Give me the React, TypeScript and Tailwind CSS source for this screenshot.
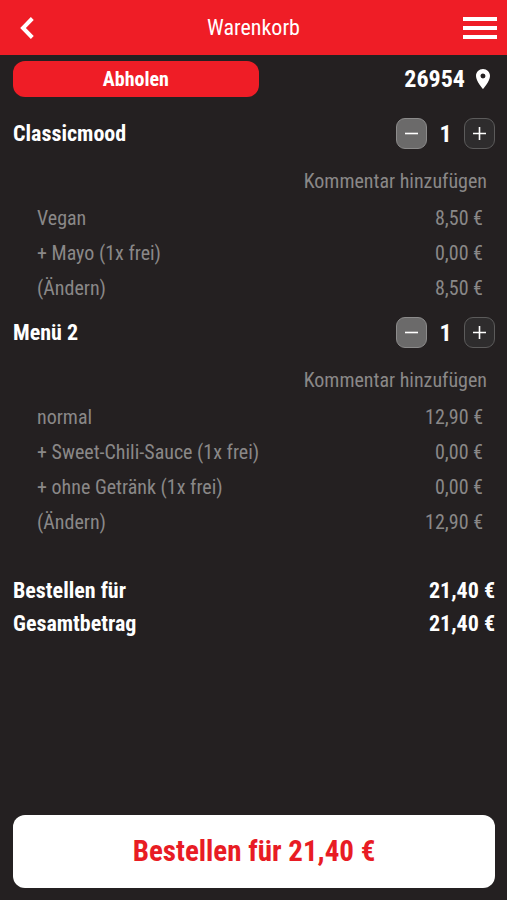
import { MdLocationOn } from "react-icons/md";

interface OptionProps {
  label: string;
  price: string;
}

interface CartItemProps {
  name: string;
  quantity: number;
  options: OptionProps[];
  total: string;
}

const items: CartItemProps[] = [
  {
    name: "Classicmood",
    quantity: 1,
    options: [
      { label: "Vegan", price: "8,50 €" },
      { label: "+ Mayo (1x frei)", price: "0,00 €" },
    ],
    total: "8,50 €",
  },
  {
    name: "Menü 2",
    quantity: 1,
    options: [
      { label: "normal", price: "12,90 €" },
      { label: "+ Sweet-Chili-Sauce (1x frei)", price: "0,00 €" },
      { label: "+ ohne Getränk (1x frei)", price: "0,00 €" },
    ],
    total: "12,90 €",
  },
];

function CartItem({ name, quantity, options, total }: CartItemProps) {
  return (
    <li>
      <div className="flex items-center justify-between">
        <h2 className="text-[22px] leading-7 font-bold">{name}</h2>
        <div className="flex items-center">
          <button
            type="button"
            aria-label={`${name} verringern`}
            className="flex size-[31px] items-center justify-center rounded-[9px] border border-[#8c8b8b] bg-[#6b6a6a]"
          >
            <svg viewBox="0 0 13 13" className="size-[13px]" stroke="white" strokeWidth="1.6">
              <path d="M0 6.5h13" />
            </svg>
          </button>
          <span className="w-[37px] text-center text-2xl leading-none font-bold">{quantity}</span>
          <button
            type="button"
            aria-label={`${name} erhöhen`}
            className="flex size-[31px] items-center justify-center rounded-[9px] border border-[#5c5b5b] bg-[#2e2c2d]"
          >
            <svg viewBox="0 0 13 13" className="size-[13px]" stroke="white" strokeWidth="1.6">
              <path d="M0 6.5h13M6.5 0v13" />
            </svg>
          </button>
        </div>
      </div>

      <div className="mt-3 pr-2 text-right text-xl leading-10 text-[#8a8888]">
        <button type="button">Kommentar hinzufügen</button>
      </div>

      <ul className="pr-3 pl-6 text-xl leading-[35px] text-[#8a8888]">
        {options.map((option) => (
          <li key={option.label} className="flex justify-between">
            <span>{option.label}</span>
            <span>{option.price}</span>
          </li>
        ))}
        <li className="flex justify-between">
          <button type="button">(Ändern)</button>
          <span>{total}</span>
        </li>
      </ul>
    </li>
  );
}

export default function App() {
  return (
    <div className="flex min-h-screen flex-col bg-[#242021] font-['Roboto_Condensed','Roboto',sans-serif] text-white">
      <header className="grid h-[55px] grid-cols-3 items-center bg-[#ef1d26] px-2">
        <button type="button" aria-label="Zurück" className="justify-self-start px-3">
          <svg viewBox="0 0 14 22" className="h-[22px] w-3.5" fill="none" stroke="white" strokeWidth="4">
            <path d="M12.3 1.5L3 11l9.3 9.5" />
          </svg>
        </button>
        <h1 className="text-center text-[22px]">Warenkorb</h1>
        <button type="button" aria-label="Menü" className="justify-self-end">
          <svg viewBox="0 0 38 24" className="h-6 w-[38px]" stroke="white" strokeWidth="4">
            <path d="M2 3h34M2 12h34M2 21h34" />
          </svg>
        </button>
      </header>

      <main className="flex grow flex-col pt-1.5 pr-3 pb-3 pl-[13px]">
        <div className="flex items-center justify-between">
          <button type="button" className="h-9 w-[51%] rounded-xl bg-[#ef1d26] text-xl font-bold">
            Abholen
          </button>
          <button type="button" className="flex items-center gap-1.5 text-2xl font-bold">
            26954
            <MdLocationOn className="size-6" />
          </button>
        </div>

        <ul className="mt-[21px] space-y-[11px]">
          {items.map((item) => (
            <CartItem key={item.name} {...item} />
          ))}
        </ul>

        <dl className="mt-[34px] text-[22px] leading-[33px] font-bold">
          <div className="flex justify-between">
            <dt>Bestellen für</dt>
            <dd>21,40 €</dd>
          </div>
          <div className="flex justify-between">
            <dt>Gesamtbetrag</dt>
            <dd>21,40 €</dd>
          </div>
        </dl>

        <button type="button" className="mt-auto h-[73px] rounded-xl bg-white text-[29px] font-bold text-[#e81c24]">
          Bestellen für 21,40 €
        </button>
      </main>
    </div>
  );
}
